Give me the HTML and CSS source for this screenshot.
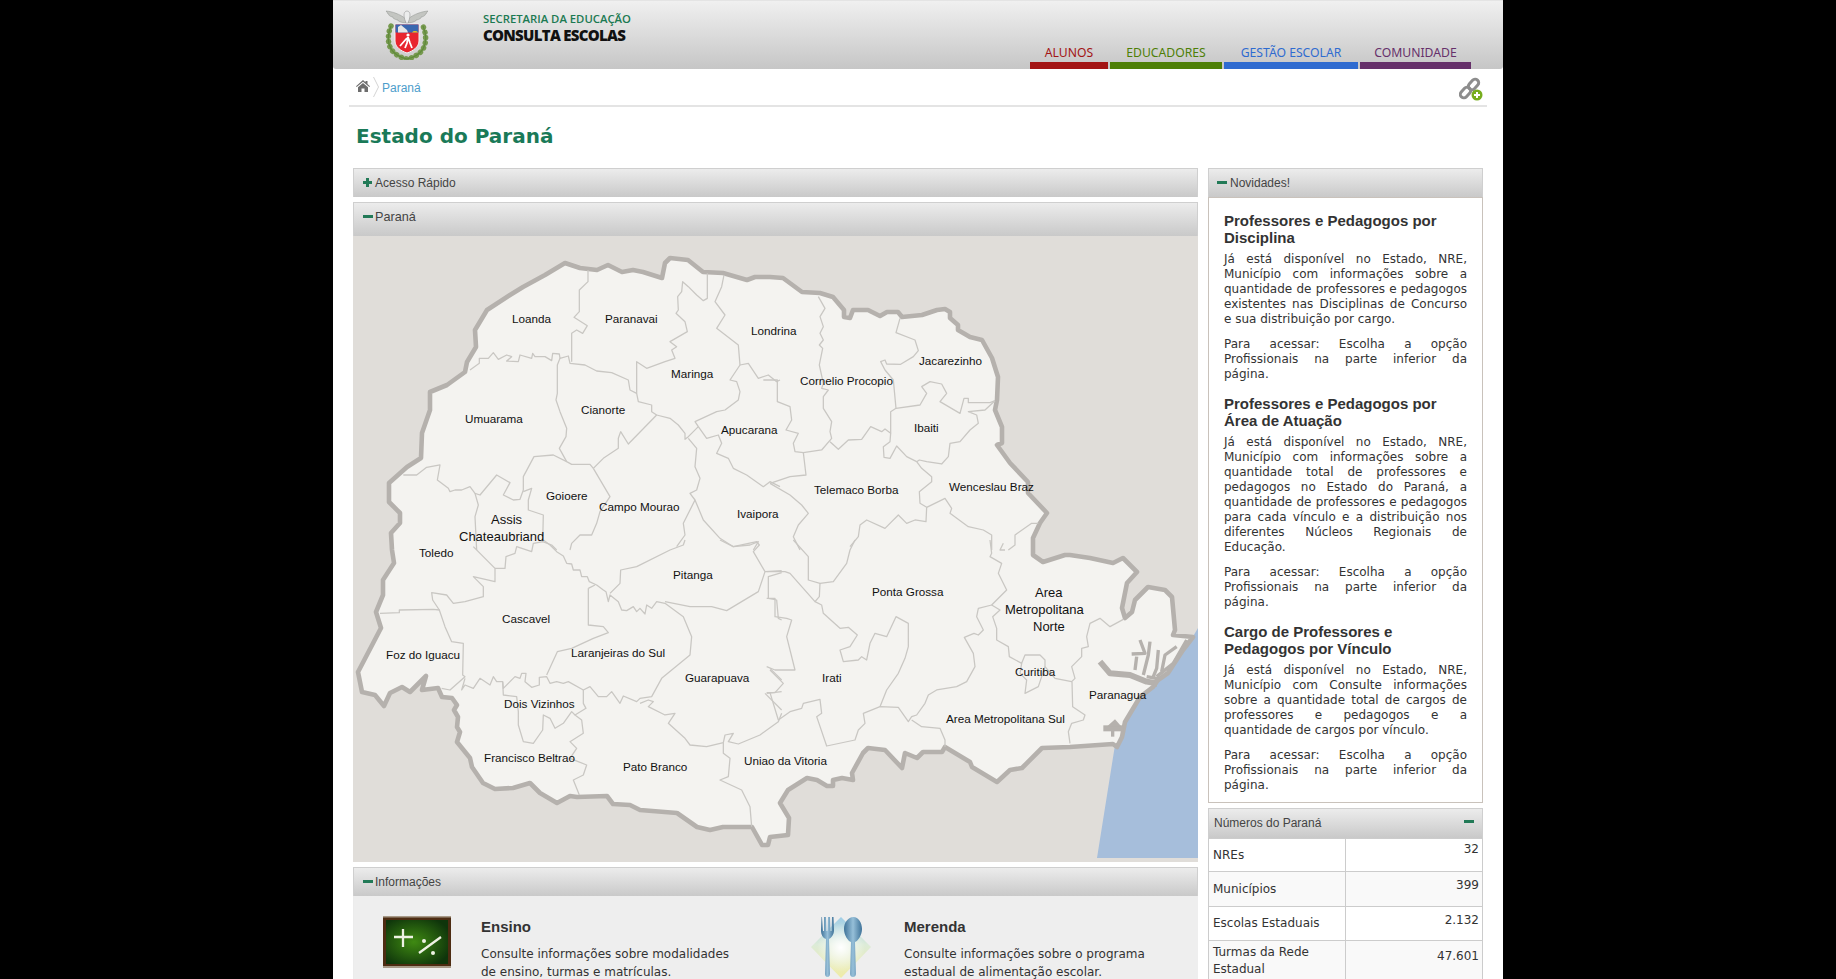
FILE: index.html
```html
<!DOCTYPE html>
<html lang="pt-BR">
<head>
<meta charset="utf-8">
<title>Consulta Escolas - Estado do Paraná</title>
<link rel="stylesheet" href="styles.css">
</head>
<body>
<div class="page">
  <header class="top">
    <div class="logo">
      <svg width="44" height="50" viewBox="0 0 44 50">
        <path d="M6 16c-3 7-4 16 0 23 3 5 10 9 16 10 6-1 13-5 16-10 4-7 3-16 0-23" fill="none" stroke="#76994f" stroke-width="5.500" stroke-dasharray=".1 5.200" stroke-linecap="round"/>
        <path d="M6 16c-3 7-4 16 0 23 3 5 10 9 16 10 6-1 13-5 16-10 4-7 3-16 0-23" fill="none" stroke="#5f8a3a" stroke-width="1.200"/>
        <path d="M21 9C15 4 7 1.500 1 1c2 1.500 1 3 3 3.500-1 .5 2 2.500 4 2.500-1 1 3 3 5 3-1 1 5 3 8 3z" fill="#c3c5c1" stroke="#8f938f" stroke-width=".5"/>
        <path d="M23 9c6-5 14-7.500 20-8-2 1.500-1 3-3 3.500 1 .5-2 2.500-4 2.500 1 1-3 3-5 3 1 1-5 3-8 3z" fill="#c3c5c1" stroke="#8f938f" stroke-width=".5"/>
        <path d="M22 1c2 0 3 2 3 4s-1 7-3 9c-2-2-3-7-3-9s1-4 3-4z" fill="#eceded" stroke="#888" stroke-width=".5"/>
        <path d="M10 14h24v17c0 6-6 10-12 12-6-2-12-6-12-12z" fill="#e8252e" stroke="#f3f3f3" stroke-width="1"/>
        <path d="M10.500 14.500h23v8h-23z" fill="#3a68b0"/>
        <path d="M27 22.500a3.500 3 0 0 1 6 0z" fill="#f2c21f"/>
        <path d="M13 17l3-2 6 5 1 2.500H13z" fill="#e6e6e6"/>
        <circle cx="23" cy="25" r="1.600" fill="#fff"/>
        <path d="M23 27l-1 6-2 5M23 27l2 6 2 5M22 28l-7 8" fill="none" stroke="#fff" stroke-width="1.800"/>
      </svg>
    </div>
    <div class="brand">
      <span class="brand-sub">SECRETARIA DA EDUCAÇÃO</span>
      <span class="brand-main">CONSULTA ESCOLAS</span>
    </div>
    <nav class="nav">
      <a class="nav-item nav-red">ALUNOS</a>
      <a class="nav-item nav-green">EDUCADORES</a>
      <a class="nav-item nav-blue">GESTÃO ESCOLAR</a>
      <a class="nav-item nav-purple">COMUNIDADE</a>
    </nav>
  </header>

  <div class="crumbs">
    <svg class="home" width="14" height="12" viewBox="0 0 14 12"><path d="M7 0l2.500 2.200V1h2v3l2.500 2.300-.7.7L7 1.700 .7 7 0 6.300zM2 7.200L7 3l5 4.200V12H8.500V8.500h-3V12H2z" fill="#6d6d6d"/></svg>
    <svg class="chev" width="6" height="20" viewBox="0 0 6 20"><path d="M.5 0l5 10-5 10" fill="none" stroke="#d4d4d4"/></svg>
    <a class="crumb-link">Paraná</a>
    <svg class="chain" width="24" height="24" viewBox="0 0 24 24">
      <g fill="none" stroke="#8d8d8d" stroke-width="3">
        <rect x="11" y="1.500" width="7" height="12" rx="3.500" transform="rotate(42 14.500 7.500)"/>
        <rect x="3" y="9.500" width="7" height="12" rx="3.500" transform="rotate(42 6.500 15.500)"/>
      </g>
      <circle cx="18" cy="18" r="5.500" fill="#77ad1e"/>
      <path d="M18 15v6M15 18h6" stroke="#fff" stroke-width="2"/>
    </svg>
  </div>

  <h1 class="title">Estado do Paraná</h1>

  <div class="columns">
    <main class="col-left">
      <section class="panel">
        <div class="bar"><i class="plus"></i>Acesso Rápido</div>
      </section>
      <section class="panel">
        <div class="bar bar-tall"><i class="minus"></i>Paraná</div>
        <svg class="map" width="845" height="626" viewBox="353 236 845 626">
          <rect class="m-bg" x="353" y="236" width="845" height="626"/>
          <polygon class="m-sea" points="1198,628 1198,858 1097,858 1115,745 1125,720 1140,695 1155,682 1168,672 1185,650"/>
          <polygon class="m-land" points="565,263 545,275 523,287 510,295 487,310 475,330 476,347 467,362 465,372 447,385 430,392 430,410 422,433 421,458 407,467 389,483 389,502 400,513 400,523 391,533 392,550 394,563 383,580 383,595 376,612 381,628 358,672 362,692 375,695 384,706 390,693 402,687 410,692 426,676 422,690 438,688 442,697 452,698 457,705 454,710 458,717 457,727 460,732 457,742 470,758 472,767 483,783 495,789 513,788 530,783 540,793 557,803 570,796 577,797 607,796 613,804 630,805 640,810 677,813 697,827 710,830 723,827 752,827 762,845 768,845 770,837 788,835 789,818 780,803 788,790 807,778 817,780 827,786 833,786 833,780 842,778 853,780 852,773 863,753 868,748 885,750 902,768 905,753 917,758 923,752 942,752 945,747 970,762 972,767 997,782 1010,770 1022,768 1042,748 1070,747 1113,744 1117,747 1122,737 1125,722 1140,697 1153,687 1158,680 1168,673 1183,650 1193,637 1173,635 1175,630 1172,597 1165,590 1148,587 1135,600 1132,612 1125,618 1122,608 1127,583 1137,572 1123,558 1113,563 1090,558 1070,555 1065,555 1043,562 1033,555 1033,538 1040,523 1047,513 1028,493 1028,482 1010,463 997,445 1002,443 1002,427 995,410 997,400 998,377 992,358 982,340 970,337 958,330 958,325 950,318 950,312 945,309 937,310 922,315 902,317 898,312 887,312 880,316 868,310 853,310 850,318 844,317 844,310 833,297 820,293 802,292 783,278 770,277 755,277 747,280 723,273 703,272 688,260 670,258 665,263 662,278 643,272 633,270 622,272 608,265 597,270 580,268"/>

          <g class="m-in" transform="translate(350 230) scale(.33333)">
            <polyline points="714,120 714,155 688,180 688,245 672,262 712,287 698,310 680,300 665,310 665,395"/>
            <polyline points="360,420 388,400 388,385 415,385 430,368 445,388 470,375 485,380 470,393 505,395 510,375 545,385 548,370 555,380 585,380 605,392 608,370 628,372 630,385 655,378 660,400 705,405 740,423 785,428 835,450 840,480 860,490 865,515 905,525 905,545 920,555"/>
            <polyline points="630,385 622,405 622,490 618,510 630,545 650,595 648,620 628,655 650,695 665,703 720,703 730,715"/>
            <polyline points="1072,130 1072,205 1060,212 1040,195 1015,170 998,155 995,185 983,200 985,240 978,250 1005,275 1012,305 960,335 980,350 965,360 975,385 945,395 890,415 860,395 860,490"/>
            <polyline points="920,555 835,642 812,605 805,625 805,655 760,685 730,715"/>
            <polyline points="160,735 200,735 230,712 270,705 262,750 295,775 300,785 315,780 335,780 360,770 375,790 390,795 440,735 480,758 460,795 490,810 510,808 520,780 520,740 552,680 610,675 650,695"/>
            <polyline points="520,785 545,775 535,810 535,840 580,855 578,935 605,945 620,960"/>
            <polyline points="375,790 385,825 375,860 380,960"/>
            <polyline points="730,715 780,800 750,845 740,880 725,915 690,915 665,940 660,960"/>
            <polyline points="920,555 960,565 985,585 1005,610 1005,628 1015,620 1045,590 1070,625 1105,615 1115,640 1100,670 1135,685 1150,715 1190,735 1240,770 1260,755 1290,770"/>
            <polyline points="1045,590 1035,575 1100,545 1125,540 1165,510 1170,485 1160,455 1140,450 1170,405 1165,345 1100,295 1125,255 1095,215 1115,170 1122,135"/>
            <polyline points="1170,405 1195,400 1225,445 1255,435 1280,455 1290,450"/>
            <polyline points="1015,625 1040,655 1035,710 1050,745 1040,780 1020,790 1035,810 1000,880 1005,915 980,950"/>
            <polyline points="1035,810 1060,870 1110,925 1150,950 1200,945 1225,935 1210,960"/>
          </g>

          <g class="m-in" transform="translate(770 230) scale(.33333)">
            <polyline points="145,200 165,235 150,260 160,290 150,310 160,330 148,345 158,355 148,405 160,460 155,475 175,480 160,500 160,535 185,575 180,605 185,625 155,660 100,668 108,735 60,740 0,760"/>
            <polyline points="-20,450 22,450 22,515 60,530 65,570 48,600 85,610 70,640 75,665 100,668"/>
            <polyline points="180,635 205,658 235,630 275,628 302,590 335,605 345,597 362,610 360,635 340,650 342,682 360,685 380,648 410,680 440,695 455,715 485,740 485,755 448,785 450,820 470,832 525,805 545,835 540,850 595,890 640,900 665,915 665,960"/>
            <polyline points="362,610 362,545 378,535 370,450 345,420 332,395 345,390 350,402 392,403 430,380 445,362 435,330 378,308 390,265"/>
            <polyline points="378,535 450,525 470,490 455,470 480,455 515,462 530,490 510,515 570,550 582,505 595,505 595,518 660,518 675,512"/>
            <polyline points="675,512 645,540 595,545 620,555 625,580 600,600 570,635 540,640 535,680 515,702 470,695 448,690 440,695"/>
            <polyline points="0,760 60,795 95,825 115,850 85,885 70,920 90,960"/>
            <polyline points="470,832 468,875 435,870 410,880 385,855 345,895 290,870 270,885 265,920 240,950"/>
            <polyline points="805,880 785,880 735,915 735,945 715,960"/>
            <polyline points="700,940 690,960 705,960"/>
          </g>

          <g class="m-in" transform="translate(350 540) scale(.33333)">
            <polyline points="370,20 435,85 435,125 370,110 400,140 400,170 345,185 310,190 290,165 245,158 248,180 268,210"/>
            <polyline points="90,220 148,218 148,210 250,208 268,210 285,260 305,305 340,310 338,405 345,410 300,450 275,445"/>
            <polyline points="345,415 335,450 345,435 370,445 390,415 420,435 430,410 440,425 458,425 460,445 495,410 510,415 515,400 528,400 525,425 545,442 568,435 568,412 590,410 600,430 620,425 640,430 655,425 700,450 720,440 745,470 770,470 785,455 810,490 820,468 860,485 870,475 905,470 935,415 1020,345 1025,290 1000,230 945,190 920,185 905,205 890,195 885,222 870,205 860,215 850,200 830,212 815,210 805,185 780,165 775,185 768,155 760,150 740,135 718,125 712,110 695,110 690,90 670,90 665,72 650,70 640,48 620,35 600,15 580,0"/>
            <polyline points="715,145 715,255 760,260 775,278 730,295 665,325 622,335 590,405"/>
            <polyline points="715,145 735,135"/>
            <polyline points="435,85 465,85 468,50 495,40 500,20 545,35 550,10 580,5"/>
            <polyline points="780,160 810,130 812,90 860,80 960,30 1000,15 1005,0"/>
            <polyline points="945,185 1020,200 1085,200 1130,212 1225,155 1245,95 1210,35 1228,15 1220,5 1150,20 1110,0"/>
            <polyline points="1245,95 1295,92"/>
            <polyline points="1295,98 1255,110 1255,175 1280,180 1285,235 1295,240"/>
            <polyline points="458,425 460,465 500,470 505,515 505,555 520,605 550,610 578,570 580,525 600,535 615,565 640,550 665,515 675,525"/>
            <polyline points="700,450 700,490 708,505 675,525 695,540 700,580 660,605 680,625 660,655 710,675 700,705 670,720 688,765"/>
            <polyline points="870,490 895,480 910,485 895,500 945,525 975,520 955,550 1005,595 1020,615 1070,620 1120,608 1125,585 1150,580 1135,605 1165,612 1230,585 1285,545 1295,520"/>
            <polyline points="1120,608 1120,640 1140,655 1135,710 1110,720 1175,750 1200,800 1205,860"/>
            <polyline points="1260,385 1295,420"/>
            <polyline points="1245,460 1295,510"/>
            <polyline points="1250,460 1295,455"/>
          </g>

          <g class="m-in" transform="translate(770 540) scale(.33333)">
            <polyline points="70,0 115,50 115,120 150,130 190,125 230,70 240,30 255,0"/>
            <polyline points="150,130 148,170 135,185 155,195 160,220 210,265 235,262 262,285 240,320 210,330 220,365 265,360 275,350 290,360 300,310 315,280 350,290 378,230 415,250 415,320 405,355 385,400 350,450 330,500"/>
            <polyline points="-10,95 45,95 60,100 135,185"/>
            <polyline points="-10,175 15,175 15,230 50,235 65,240 50,290 75,390 15,390 -10,380"/>
            <polyline points="0,390 40,430 15,458 -10,458"/>
            <polyline points="0,458 25,540 60,515 95,505 100,490 150,478 155,520 140,530 170,618 255,600 265,570 285,550 280,520 330,500 385,502 415,545 425,530 440,525 465,490 475,465 500,450 560,440 590,425 615,380 610,340 583,292 612,280 625,285 640,270 620,230 625,205 665,195 690,210 668,230 680,265 680,300 715,320 718,350 755,370 765,345 810,345 825,360 825,380 855,415 905,425 915,415 905,380 935,350 935,325 955,320 950,290 960,250 990,235 1020,260 1060,238"/>
            <polyline points="755,370 750,400 770,420 765,460 805,440 825,380"/>
            <polyline points="660,0 665,40 660,50 695,70 685,100 710,150 665,195"/>
            <polyline points="906,425 908,500 945,525 940,540 905,550 895,575 900,610"/>
            <polyline points="425,540 455,560 510,565 525,600 525,620"/>
          </g>

          <g class="m-bay" transform="translate(770 540) scale(.33333)">
            <polyline class="b-big" points="990,365 1020,400 1080,405 1130,425 1160,430"/>
            <polyline points="1085,342 1125,340 1110,300"/>
            <polyline points="1140,305 1135,345 1120,405"/>
            <polyline points="1100,350 1095,390"/>
            <polyline points="1165,330 1160,385 1150,410"/>
            <polyline points="1220,320 1185,345 1175,395"/>
            <polyline points="1250,300 1210,370 1160,410"/>
            <polyline class="b-big" points="1000,565 1060,565"/>
            <polygon class="b-fill" points="1010,560 1035,538 1055,560"/>
            <polyline points="1028,565 1028,590"/>
            <polyline points="1130,410 1160,415 1155,440"/>
          </g>

          <g class="m-lbl">
            <text x="512" y="323">Loanda</text>
            <text x="605" y="323">Paranavai</text>
            <text x="751" y="335">Londrina</text>
            <text x="919" y="365">Jacarezinho</text>
            <text x="671" y="378">Maringa</text>
            <text x="800" y="385">Cornelio Procopio</text>
            <text x="581" y="414">Cianorte</text>
            <text x="465" y="423">Umuarama</text>
            <text x="914" y="432">Ibaiti</text>
            <text x="721" y="434">Apucarana</text>
            <text x="949" y="491">Wenceslau Braz</text>
            <text x="814" y="494">Telemaco Borba</text>
            <text x="546" y="500">Goioere</text>
            <text x="599" y="511">Campo Mourao</text>
            <text x="737" y="518">Ivaipora</text>
            <text class="m-big" x="491" y="524">Assis</text>
            <text class="m-big" x="459" y="541">Chateaubriand</text>
            <text x="419" y="557">Toledo</text>
            <text x="673" y="579">Pitanga</text>
            <text x="872" y="596">Ponta Grossa</text>
            <text class="m-big" x="1035" y="597">Area</text>
            <text class="m-big" x="1005" y="614">Metropolitana</text>
            <text class="m-big" x="1033" y="631">Norte</text>
            <text x="502" y="623">Cascavel</text>
            <text x="571" y="657">Laranjeiras do Sul</text>
            <text x="386" y="659">Foz do Iguacu</text>
            <text x="1015" y="676">Curitiba</text>
            <text x="685" y="682">Guarapuava</text>
            <text x="822" y="682">Irati</text>
            <text x="1089" y="699">Paranagua</text>
            <text x="504" y="708">Dois Vizinhos</text>
            <text x="946" y="723">Area Metropolitana Sul</text>
            <text x="484" y="762">Francisco Beltrao</text>
            <text x="744" y="765">Uniao da Vitoria</text>
            <text x="623" y="771">Pato Branco</text>
          </g>
        </svg>
      </section>
      <section class="panel">
        <div class="bar"><i class="minus"></i>Informações</div>
        <div class="info">
          <article class="info-item">
            <svg class="info-icon" width="68" height="52" viewBox="0 0 68 52">
              <defs>
                <radialGradient id="board" cx=".45" cy=".5" r=".62"><stop offset="0" stop-color="#3f8a12"/><stop offset="1" stop-color="#0f350b"/></radialGradient>
              </defs>
              <rect width="68" height="52" fill="#4d2c12"/>
              <rect y="0" width="68" height="1.500" fill="#a89a88"/>
              <rect y="50" width="68" height="2" fill="#a89a88"/>
              <rect x="3" y="4" width="62" height="44" fill="url(#board)"/>
              <path d="M11 21h19M20 13v18M36 37l22-16" stroke="#eef2e4" stroke-width="2.300" fill="none"/>
              <circle cx="41" cy="25" r="2" fill="#eef2e4"/><circle cx="50" cy="37" r="2" fill="#eef2e4"/>
            </svg>
            <div class="info-text">
              <h3>Ensino</h3>
              <p>Consulte informações sobre modalidades de ensino, turmas e matrículas.</p>
            </div>
          </article>
          <article class="info-item">
            <svg class="info-icon" width="68" height="63" viewBox="0 0 68 63">
              <defs>
                <linearGradient id="nap" x1="0" y1="0" x2="0" y2="1"><stop offset="0" stop-color="#9fcde6"/><stop offset=".45" stop-color="#dcebd8"/><stop offset="1" stop-color="#f0eca6"/></linearGradient>
                <radialGradient id="napc" cx=".5" cy=".5" r=".4"><stop offset="0" stop-color="#fff"/><stop offset="1" stop-color="#fff" stop-opacity="0"/></radialGradient>
                <linearGradient id="cut" x1="0" y1="0" x2="1" y2="0"><stop offset="0" stop-color="#3f7399"/><stop offset=".5" stop-color="#96bfd8"/><stop offset="1" stop-color="#3f7399"/></linearGradient>
              </defs>
              <polygon points="35,1 65,31 35,62 5,31" fill="url(#nap)"/>
              <polygon points="35,1 65,31 35,62 5,31" fill="url(#napc)"/>
              <path d="M16 1l1 14h1V1h2l.5 14h1L22 1h2l.5 14h1L26 1h1.500l.5 13c0 5-3 8-5 9l1 35c0 4-5 4-5 0l1-35c-3-1-5-4-5-9l.5-13z" fill="url(#cut)"/>
              <path d="M47.500 1c5 0 8.500 6 8.500 12s-4 12-7 13l1 32c0 4-6 4-6 0l1-32c-3-1-7-7-7-13s4-12 9.500-12z" fill="url(#cut)"/>
            </svg>
            <div class="info-text">
              <h3>Merenda</h3>
              <p>Consulte informações sobre o programa estadual de alimentação escolar.</p>
            </div>
          </article>
        </div>
      </section>
    </main>

    <aside class="col-right">
      <section class="panel">
        <div class="bar bar-news"><i class="minus"></i>Novidades!</div>
        <div class="news">
          <h3>Professores e Pedagogos por Disciplina</h3>
          <p>Já está disponível no Estado, NRE, Município com informações sobre a quantidade de professores e pedagogos existentes nas Disciplinas de Concurso e sua distribuição por cargo.</p>
          <p>Para acessar: Escolha a opção Profissionais na parte inferior da página.</p>
          <h3>Professores e Pedagogos por Área de Atuação</h3>
          <p>Já está disponível no Estado, NRE, Município com informações sobre a quantidade total de professores e pedagogos no Estado do Paraná, a quantidade de professores e pedagogos para cada vínculo e a distribuição nos diferentes Núcleos Regionais de Educação.</p>
          <p>Para acessar: Escolha a opção Profissionais na parte inferior da página.</p>
          <h3>Cargo de Professores e Pedagogos por Vínculo</h3>
          <p>Já está disponível no Estado, NRE, Município com Consulte informações sobre a quantidade total de cargos de professores e pedagogos e a quantidade de cargos por vínculo.</p>
          <p>Para acessar: Escolha a opção Profissionais na parte inferior da página.</p>
        </div>
      </section>
      <section class="panel">
        <div class="bar bar-num">Números do Paraná<i class="minus minus-end"></i></div>
        <table class="nums">
          <tr><th>NREs</th><td>32</td></tr>
          <tr><th>Municípios</th><td>399</td></tr>
          <tr><th>Escolas Estaduais</th><td>2.132</td></tr>
          <tr><th>Turmas da Rede Estadual</th><td>47.601</td></tr>
        </table>
      </section>
    </aside>
  </div>
</div>
</body>
</html>
```

FILE: styles.css
```css
* { box-sizing: border-box; }
html, body { margin: 0; height: 979px; overflow: hidden; background: #000; }
body { font-family: "DejaVu Sans", sans-serif; font-size: 12px; color: #333; }

.page { width: 1170px; height: 979px; margin: 0 auto; background: #fff; overflow: hidden; }

.top {
  display: flex; height: 69px;
  background: linear-gradient(#f0f0f0, #c6c6c6);
  border-top: 1px solid #e4e4e4;
  border-radius: 0 0 3px 3px;
}
.logo { width: 44px; height: 50px; margin: 9px 0 0 52px; }
.brand { display: flex; flex-direction: column; margin: 11px 0 0 54px; font-family: "Open Sans", sans-serif; }
.brand-sub { font-size: 11.300px; line-height: 14px; font-weight: 600; color: #1b7a52; }
.brand-main { font-size: 15px; line-height: 19px; font-weight: 800; color: #111; letter-spacing: -.7px; }

.nav { display: flex; gap: 2px; margin: auto 32px 0 auto; font-family: "Noto Sans", sans-serif; }
.nav-item { display: block; height: 25px; border-bottom: 7px solid; text-align: center; font-size: 12.200px; line-height: 17px; }
.nav-red { width: 78px; color: #a31515; border-color: #a31515; }
.nav-green { width: 112px; color: #4e7f06; border-color: #4e7f06; }
.nav-blue { width: 134px; color: #2f6bd0; border-color: #2f6bd0; }
.nav-purple { width: 111px; color: #66306a; border-color: #66306a; }

.crumbs {
  display: flex; align-items: center; height: 38px;
  margin: 0 16px; padding-left: 7px;
  border-bottom: 2px solid #e4e4e4;
}
.home { margin-top: -2px; }
.chev { margin: 0 3px 0 3px; }
.crumb-link { padding-top: 2px; font-family: "Liberation Sans", sans-serif; font-size: 12px; color: #4d9dcb; }
.chain { margin: 4px 4px 0 auto; }

.title {
  margin: 0; padding: 17px 0 0 23px; height: 61px;
  font-family: "DejaVu Sans", sans-serif; font-size: 20px; line-height: 24px; font-weight: 700; color: #1a7a58;
}

.columns { display: flex; gap: 10px; padding-left: 20px; align-items: flex-start; }
.col-left { width: 845px; flex: none; display: flex; flex-direction: column; gap: 5px; }
.col-right { width: 275px; flex: none; display: flex; flex-direction: column; gap: 5px; }

.bar {
  display: flex; align-items: center; height: 29px; padding-left: 9px;
  background: linear-gradient(#ececec, #c9c9c9);
  border: 1px solid #cfcfcf; border-bottom: 0;
  font-family: "Liberation Sans", sans-serif; font-size: 12px; color: #444;
}
.bar-tall { height: 34px; padding-bottom: 5px; font-size: 12.700px; }
.bar-news { padding-left: 8px; }
.bar-news .minus { margin-right: 3px; }
.bar-num { padding-left: 5px; padding-bottom: 1px; height: 30px; }

.plus { position: relative; flex: none; width: 9px; height: 9px; margin: 0 3px 1px 0; }
.plus::before, .plus::after { content: ""; position: absolute; background: #227a57; }
.plus::before { left: 0; right: 0; top: 3px; height: 3px; }
.plus::after { top: 0; bottom: 0; left: 3px; width: 3px; }
.minus { flex: none; width: 10px; height: 3px; margin: 0 2px 2px 0; background: #227a57; }
.bar .minus-end { margin: 0 8px 3px auto; }

.map { display: block; }
.m-bg { fill: #e0ddd9; }
.m-sea { fill: #a6bedb; }
.m-land { fill: #f4f3f0; stroke: #b5b1ad; stroke-width: 4.600; stroke-linejoin: round; }
.m-in polyline { fill: none; stroke: #c9c7c3; stroke-width: 3.800; stroke-linejoin: round; }
.m-bay polyline { fill: none; stroke: #b5b1ad; stroke-width: 10; stroke-linejoin: round; }
.m-bay .b-big { stroke-width: 18; }
.m-bay .b-fill { fill: #b5b1ad; }
.m-lbl text { font-family: "Liberation Sans", sans-serif; font-size: 11.700px; fill: #111; }
.m-lbl .m-big { font-size: 13px; }

.info { display: flex; height: 100px; padding-top: 20px; background: #eee; border-left: 1px solid #ececec; }
.info-item { display: flex; width: 422px; padding-left: 29px; }
.info-item:last-child { padding-left: 30px; }
.info-icon { flex: none; }
.info-text { width: 260px; margin-left: 30px; }
.info-text h3 { margin: 2px 0 10px; font-family: "Liberation Sans", sans-serif; font-size: 15px; line-height: 17px; font-weight: 700; color: #333; }
.info-text p { margin: 0; line-height: 18px; }

.news { height: 606px; padding: 14px 15px 0; border: 1px solid #c9c2bb; background: #fff; }
.news h3 { margin: 0 0 6px; font-family: "Liberation Sans", sans-serif; font-size: 15px; line-height: 17px; font-weight: 700; color: #333; }
.news p { margin: 0 0 10px; line-height: 15px; text-align: justify; }
.news p + h3 { margin-top: 13px; }

.nums { width: 100%; border-collapse: collapse; table-layout: fixed; }
.nums th, .nums td { border: 1px solid #ccc; font-size: 12px; font-weight: 400; line-height: 17px; color: #333; }
.nums tr:nth-child(even) th, .nums tr:nth-child(even) td { background: #f9f9f9; }
.nums th { width: 137px; padding: 8px 4px 7px; text-align: left; }
.nums td { padding: 2px 3px 0 4px; text-align: right; vertical-align: top; }
.nums tr:nth-child(2) th { padding: 9px 4px 8px; }
.nums tr:nth-child(3) th { padding: 8px 4px 8px; }
.nums tr:nth-child(2) td { padding-top: 5px; }
.nums tr:nth-child(3) td { padding-top: 5px; }
.nums tr:nth-child(4) td { padding-top: 7px; }
.nums tr:nth-child(4) th { padding-top: 3px; }
```
